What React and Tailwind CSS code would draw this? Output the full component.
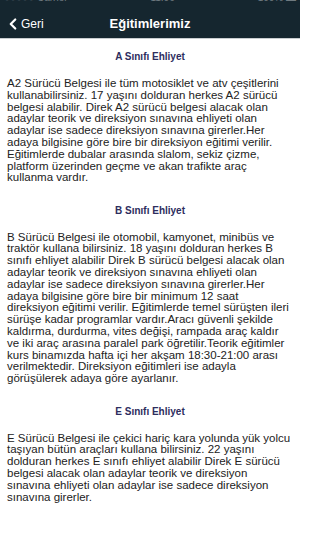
import { ChevronLeft } from "lucide-react";

const sections = [
  {
    title: "A Sınıfı Ehliyet",
    lines: [
      "A2 Sürücü Belgesi ile tüm motosiklet ve atv çeşitlerini",
      "kullanabilirsiniz. 17 yaşını dolduran herkes A2 sürücü",
      "belgesi alabilir. Direk A2 sürücü belgesi alacak olan",
      "adaylar teorik ve direksiyon sınavına ehliyeti olan",
      "adaylar ise sadece direksiyon sınavına girerler.Her",
      "adaya bilgisine göre bire bir direksiyon eğitimi verilir.",
      "Eğitimlerde dubalar arasında slalom, sekiz çizme,",
      "platform üzerinden geçme ve akan trafikte araç",
      "kullanma vardır.",
    ],
  },
  {
    title: "B Sınıfı Ehliyet",
    lines: [
      "B Sürücü Belgesi ile otomobil, kamyonet, minibüs ve",
      "traktör kullana bilirsiniz. 18 yaşını dolduran herkes B",
      "sınıfı ehliyet alabilir Direk B sürücü belgesi alacak olan",
      "adaylar teorik ve direksiyon sınavına ehliyeti olan",
      "adaylar ise sadece direksiyon sınavına girerler.Her",
      "adaya bilgisine göre bire bir minimum 12 saat",
      "direksiyon eğitimi verilir. Eğitimlerde temel sürüşten ileri",
      "sürüşe kadar programlar vardır.Aracı güvenli şekilde",
      "kaldırma, durdurma, vites değişi, rampada araç kaldır",
      "ve iki araç arasına paralel park öğretilir.Teorik eğitimler",
      "kurs binamızda hafta içi her akşam 18:30-21:00 arası",
      "verilmektedir. Direksiyon eğitimleri ise adayla",
      "görüşülerek adaya göre ayarlanır.",
    ],
  },
  {
    title: "E Sınıfı Ehliyet",
    lines: [
      "E Sürücü Belgesi ile çekici hariç kara yolunda yük yolcu",
      "taşıyan bütün araçları kullana bilirsiniz. 22 yaşını",
      "dolduran herkes E sınıfı ehliyet alabilir Direk E sürücü",
      "belgesi alacak olan adaylar teorik ve direksiyon",
      "sınavına ehliyeti olan adaylar ise sadece direksiyon",
      "sınavına girerler.",
    ],
  },
];

export default function App() {
  return (
    <div className="w-[300px] h-[533px] overflow-hidden bg-white font-['Liberation_Sans',Arial,sans-serif]">
      <header className="h-[39px] overflow-hidden bg-[#15262f] border-b border-[#c9cdd0] flex flex-col">
        {/* status bar, mostly cut off at the top */}
        <div className="-mt-[8px] h-[12px] px-[4px] flex items-center justify-between text-[10px] leading-[12px] text-[#6f7a80]">
          <span>●●●●● Carrier</span>
          <span>11:06</span>
          <span>100% ▬</span>
        </div>
        <nav className="flex-1 pt-[6px] grid grid-cols-[1fr_auto_1fr] items-center">
          <button className="pl-[4px] flex items-center text-white text-[12px]">
            <ChevronLeft size={18} strokeWidth={3} className="-mr-[1px]" />
            Geri
          </button>
          <h1 className="text-white font-bold text-[13px]">Eğitimlerimiz</h1>
          <span />
        </nav>
      </header>

      <main className="px-[7px] pt-[11px]">
        {sections.map((s) => (
          <section key={s.title} className="mb-[19.5px]">
            <h2 className="text-center text-[#2d2d5e] font-bold text-[10px] leading-[14px]">
              {s.title}
            </h2>
            <div className="mt-[14px] text-[#222] text-[11.5px] leading-[11.8px] whitespace-nowrap">
              {s.lines.map((l) => (
                <p key={l}>{l}</p>
              ))}
            </div>
          </section>
        ))}
      </main>
    </div>
  );
}
